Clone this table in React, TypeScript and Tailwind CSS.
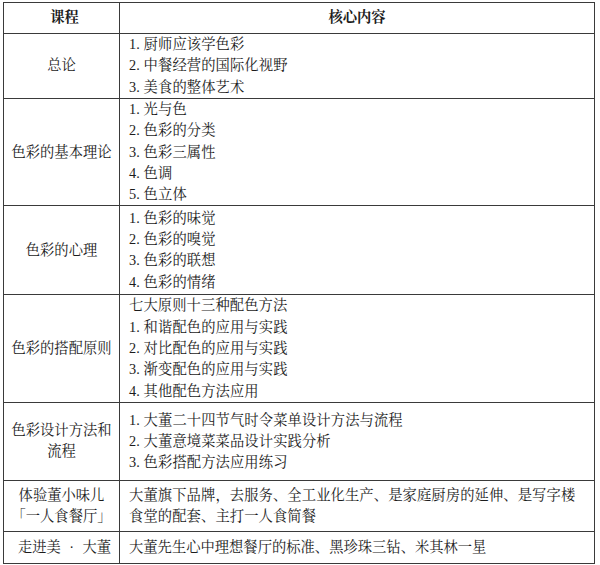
const rows: { title: string[]; items: string[]; h: string }[] = [
  {
    title: ["总论"],
    items: ["1. 厨师应该学色彩", "2. 中餐经营的国际化视野", "3. 美食的整体艺术"],
    h: "h-[65px]",
  },
  {
    title: ["色彩的基本理论"],
    items: ["1. 光与色", "2. 色彩的分类", "3. 色彩三属性", "4. 色调", "5. 色立体"],
    h: "h-[107px]",
  },
  {
    title: ["色彩的心理"],
    items: ["1. 色彩的味觉", "2. 色彩的嗅觉", "3. 色彩的联想", "4. 色彩的情绪"],
    h: "h-[89px]",
  },
  {
    title: ["色彩的搭配原则"],
    items: [
      "七大原则十三种配色方法",
      "1. 和谐配色的应用与实践",
      "2. 对比配色的应用与实践",
      "3. 渐变配色的应用与实践",
      "4. 其他配色方法应用",
    ],
    h: "h-[106px]",
  },
  {
    title: ["色彩设计方法和", "流程"],
    items: [
      "1. 大董二十四节气时令菜单设计方法与流程",
      "2. 大董意境菜菜品设计实践分析",
      "3. 色彩搭配方法应用练习",
    ],
    h: "h-[78px]",
  },
  {
    title: ["体验董小味儿", "「一人食餐厅」"],
    items: [
      "大董旗下品牌，去服务、全工业化生产、是家庭厨房的延伸、是写字楼",
      "食堂的配套、主打一人食简餐",
    ],
    h: "h-[51px]",
  },
];

const font = {
  fontFamily:
    '"Liberation Serif", "Noto Serif CJK SC", "Noto Sans CJK SC", serif',
};

export default function App() {
  return (
    <div className="w-[600px] h-[565px] bg-white pt-[2px] pl-[3px]" style={font}>
      <table className="w-[592px] table-fixed border-collapse text-[14.3px] leading-[21.3px] text-[#1c1c1c]">
        <colgroup>
          <col className="w-[116px]" />
          <col />
        </colgroup>
        <thead>
          <tr className="h-[31px]">
            <th className="border border-[#3a3a3a] font-bold text-center align-middle pl-[6px]">
              课程
            </th>
            <th className="border border-[#3a3a3a] font-bold text-center align-middle">
              核心内容
            </th>
          </tr>
        </thead>
        <tbody>
          {rows.map((r, i) => (
            <tr key={i} className={r.h}>
              <td className="border border-[#3a3a3a] text-center align-middle px-[4px]">
                {r.title.map((t) => (
                  <div key={t}>{t}</div>
                ))}
              </td>
              <td className="border border-[#3a3a3a] align-middle pl-[9px] pr-0 tracking-[0.1px]">
                {r.items.map((t) => (
                  <div key={t} className="whitespace-nowrap">
                    {t}
                  </div>
                ))}
              </td>
            </tr>
          ))}
          <tr className="h-[32px]">
            <td className="border border-[#3a3a3a] align-middle pl-[14px] pr-[8px]">
              <div className="flex justify-between">
                <span>走进美</span>
                <span>·</span>
                <span>大董</span>
              </div>
            </td>
            <td className="border border-[#3a3a3a] align-middle pl-[9px]">
              大董先生心中理想餐厅的标准、黑珍珠三钻、米其林一星
            </td>
          </tr>
        </tbody>
      </table>
    </div>
  );
}
